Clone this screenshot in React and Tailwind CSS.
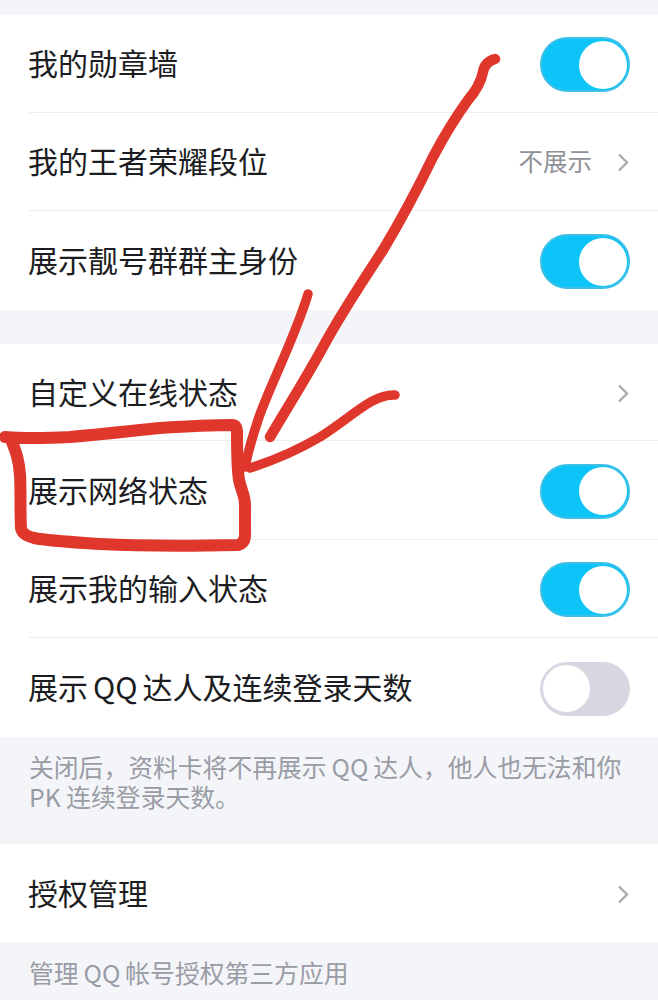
const font = { fontFamily: '"Noto Sans CJK SC", "Noto Sans", sans-serif' };

function Toggle({ on }) {
  if (on) {
    return (
      <div className="w-[90px] h-[55px] mt-[2px] rounded-full bg-[#0cc4f8] border-2 border-[#3dbfe6] flex items-center justify-end pr-[1px]">
        <div className="w-[48px] h-[48px] rounded-full bg-white" />
      </div>
    );
  }
  return (
    <div className="w-[90px] h-[54px] mt-[2px] rounded-full bg-[#d6d7e0] flex items-center pl-[3px]">
      <div className="w-[47px] h-[47px] rounded-full bg-white" />
    </div>
  );
}

function Chevron() {
  return (
    <svg className="mt-[2px]" width="13" height="21" viewBox="0 0 13 21" fill="none">
      <path d="M2 2.5l8 8-8 8" stroke="#a9abb3" strokeWidth="2.4" />
    </svg>
  );
}

function Row({ title, toggle, chevron, value, last, h = 'h-[98px]' }) {
  return (
    <div className={`${h} pl-[29px] flex`}>
      <div className={`flex-1 flex items-center justify-between pr-[28px] ${last ? '' : 'border-b border-[#ededf0]'}`}>
        <span className="text-[30px] text-[#1c1d22] -ml-[1px] -mt-[2px]">{title}</span>
        <div className="flex items-center gap-[25px]">
          {value && <span className="text-[24.5px] text-[#8f9198]">{value}</span>}
          {chevron && <Chevron />}
          {toggle && <Toggle on={toggle === 'on'} />}
        </div>
      </div>
    </div>
  );
}

function Scribble() {
  return (
    <svg className="absolute top-0 left-0" width="658" height="1000" fill="none" stroke="#e0372c" strokeLinecap="round" strokeLinejoin="round">
      {/* box round the network row */}
      <path
        strokeWidth="12"
        d="M5 437C30 439 50 438 70 437C105 434 130 431 160 428C190 426 215 425 232 425Q237 425 237 431C237 450 237 468 239 480C241 490 245 495 245 505C245 517 245 527 245 535Q245 543 238 545C190 546 140 546 100 544C70 542 50 541 34 538Q22 535 21 528C20 510 21 490 20 475C19 460 16 452 12 442"
      />
      {/* long stroke */}
      <path
        strokeWidth="10.5"
        d="M495 59C488 61 484 66 483 72C481 82 475 92 468 100C455 118 443 138 433 157C418 188 401 220 383 250C362 282 340 315 323 347C305 380 287 408 270 437"
      />
      <path strokeWidth="9.5" d="M308 294C296 335 268 390 258 420C252 438 248 452 245 467" />
      <path strokeWidth="9.5" d="M395 395C372 394 352 417 320 437C298 450 272 461 250 468" />
    </svg>
  );
}

export default function App() {
  return (
    <div style={font} className="relative w-[658px] h-[1000px] overflow-hidden bg-[#f4f5f9]">
      <div className="pt-[15px]">
        <div className="bg-white">
          <Row title="我的勋章墙" toggle="on" />
          <Row title="我的王者荣耀段位" value="不展示" chevron />
          <Row title="展示靓号群群主身份" toggle="on" last h="h-[99px]" />
        </div>
        <div className="bg-white mt-[34px]">
          <Row title="自定义在线状态" chevron h="h-[97px]" />
          <Row title="展示网络状态" toggle="on" h="h-[99px]" />
          <Row title="展示我的输入状态" toggle="on" />
          <Row
            title={<>展示<span className="mx-[5px]">QQ</span>达人及连续登录天数</>}
            toggle="off"
            last
            h="h-[99px]"
          />
        </div>
        <p className="h-[107px] px-[29px] pt-[14px] text-[24.8px] leading-[30px] text-[#9a9ca5]">
          {'关闭后，资料卡将不再展示\u2009QQ\u2009达人，他人也无法和你 PK 连续登录天数。'}
        </p>
        <div className="bg-white">
          <Row title="授权管理" chevron last />
        </div>
        <p className="px-[29px] pt-[15px] text-[24.8px] leading-[30px] text-[#9a9ca5]">
          {'管理\u2009QQ\u2009帐号授权第三方应用'}
        </p>
      </div>
      <Scribble />
    </div>
  );
}
